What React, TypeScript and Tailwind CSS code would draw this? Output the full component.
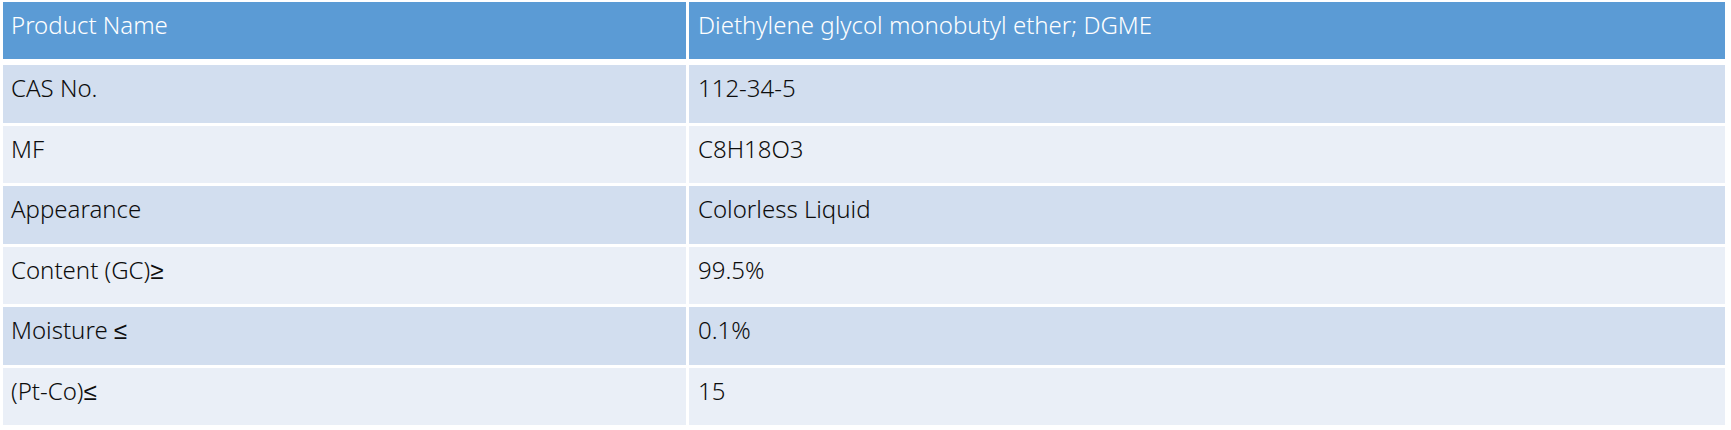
const rows: [string, string][] = [
  ['CAS No.', '112-34-5'],
  ['MF', 'C8H18O3'],
  ['Appearance', 'Colorless Liquid'],
  ['Content (GC)≥', '99.5%'],
  ['Moisture ≤', '0.1%'],
  ['(Pt-Co)≤', '15'],
];

function Row({ label, value, head, dark }: { label: string; value: string; head?: boolean; dark?: boolean }) {
  const bg = head ? 'bg-[#5b9bd5] text-white' : dark ? 'bg-[#d2deef] text-[#0d0d0d]' : 'bg-[#eaeff7] text-[#0d0d0d]';
  return (
    <div className={`grid grid-cols-[683px_1036px] gap-x-[3px] ${head ? 'h-[57px]' : 'h-[57.5px]'}`}>
      <div className={`${bg} pl-2 pt-[7px]`}>{label}</div>
      <div className={`${bg} pl-[9px] pt-[7px]`}>{value}</div>
    </div>
  );
}

export default function App() {
  return (
    <div className="w-[1731px] h-[430px] bg-white pt-[2px] pl-[3px] font-['Noto_Sans',sans-serif] font-light text-[24px] leading-[31px]">
      <div className="flex flex-col">
        <Row head label="Product Name" value="Diethylene glycol monobutyl ether; DGME" />
        <div className="flex flex-col gap-y-[3px] mt-[6px]">
          {rows.map(([l, v], i) => (
            <Row key={l} label={l} value={v} dark={i % 2 === 0} />
          ))}
        </div>
      </div>
    </div>
  );
}
